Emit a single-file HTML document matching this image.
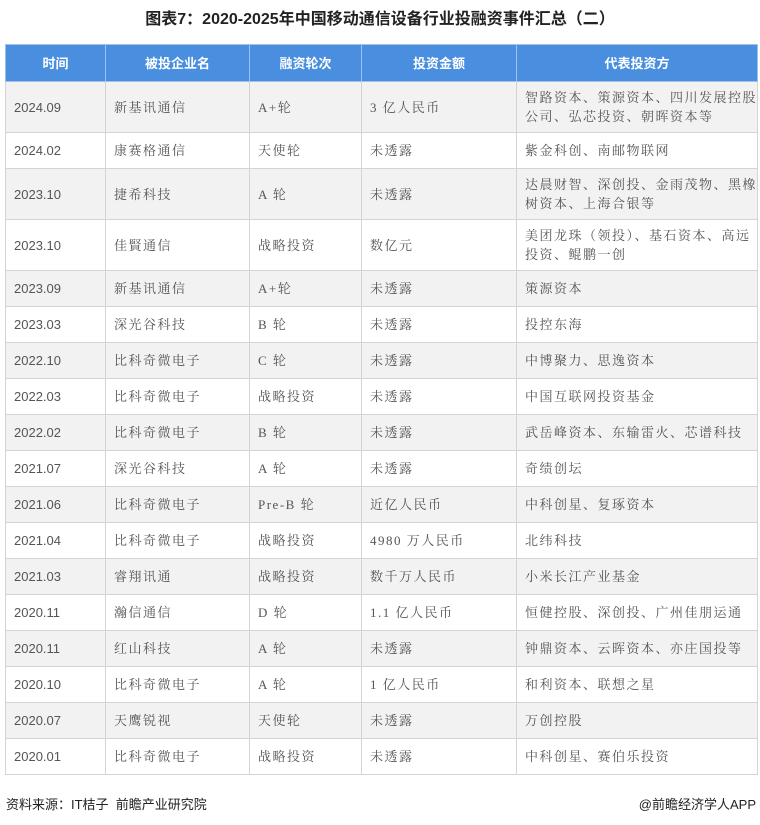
<!DOCTYPE html>
<html><head><meta charset="utf-8"><style>
body{margin:0;width:760px;height:825px;background:#fff;position:relative;font-family:"Liberation Sans","Noto Sans CJK SC",sans-serif;overflow:hidden}
.t{position:absolute;top:8px;left:0;width:760px;text-align:center;font-weight:bold;font-size:16px;color:#222;line-height:24px}
table{position:absolute;left:5px;top:44px;width:752px;border-collapse:collapse;table-layout:fixed}
td,th{border:1px solid #d4d4d4;padding:0 0 0 8px;font-size:13px;color:#555;line-height:19px;vertical-align:middle;font-family:"Liberation Serif","Noto Serif CJK SC",serif;letter-spacing:1.5px}
th{background:#4a8fdf;color:#fff;text-align:center;padding:0;font-family:"Liberation Sans","Noto Sans CJK SC",sans-serif;font-weight:bold;height:36px;border-color:#9fc1ec;letter-spacing:0}
tr:nth-child(even) td{background:#f2f2f2}
td{height:35px}
td.d{font-family:"Liberation Sans",sans-serif;letter-spacing:0}
tr.h2 td{height:50px}
.f{position:absolute;top:794px;left:6px;font-size:13px;color:#222}
.g{position:absolute;top:794px;right:4px;font-size:13px;color:#222}
</style></head><body>
<div class="t">图表7：2020-2025年中国移动通信设备行业投融资事件汇总（二）</div>
<table>
<colgroup><col style="width:100px"><col style="width:144px"><col style="width:112px"><col style="width:155px"><col style="width:241px"></colgroup>
<tr><th>时间</th><th>被投企业名</th><th>融资轮次</th><th>投资金额</th><th>代表投资方</th></tr>
<tr class="h2"><td class="d">2024.09</td><td>新基讯通信</td><td>A+轮</td><td>3 亿人民币</td><td>智路资本、策源资本、四川发展控股公司、弘芯投资、朝晖资本等</td></tr>
<tr><td class="d">2024.02</td><td>康赛格通信</td><td>天使轮</td><td>未透露</td><td>紫金科创、南邮物联网</td></tr>
<tr class="h2"><td class="d">2023.10</td><td>捷希科技</td><td>A 轮</td><td>未透露</td><td>达晨财智、深创投、金雨茂物、黑橡树资本、上海合银等</td></tr>
<tr class="h2"><td class="d">2023.10</td><td>佳賢通信</td><td>战略投资</td><td>数亿元</td><td>美团龙珠（领投）、基石资本、高远投资、鲲鹏一创</td></tr>
<tr><td class="d">2023.09</td><td>新基讯通信</td><td>A+轮</td><td>未透露</td><td>策源资本</td></tr>
<tr><td class="d">2023.03</td><td>深光谷科技</td><td>B 轮</td><td>未透露</td><td>投控东海</td></tr>
<tr><td class="d">2022.10</td><td>比科奇微电子</td><td>C 轮</td><td>未透露</td><td>中博聚力、思逸资本</td></tr>
<tr><td class="d">2022.03</td><td>比科奇微电子</td><td>战略投资</td><td>未透露</td><td>中国互联网投资基金</td></tr>
<tr><td class="d">2022.02</td><td>比科奇微电子</td><td>B 轮</td><td>未透露</td><td>武岳峰资本、东输雷火、芯谱科技</td></tr>
<tr><td class="d">2021.07</td><td>深光谷科技</td><td>A 轮</td><td>未透露</td><td>奇绩创坛</td></tr>
<tr><td class="d">2021.06</td><td>比科奇微电子</td><td>Pre-B 轮</td><td>近亿人民币</td><td>中科创星、复琢资本</td></tr>
<tr><td class="d">2021.04</td><td>比科奇微电子</td><td>战略投资</td><td>4980 万人民币</td><td>北纬科技</td></tr>
<tr><td class="d">2021.03</td><td>睿翔讯通</td><td>战略投资</td><td>数千万人民币</td><td>小米长江产业基金</td></tr>
<tr><td class="d">2020.11</td><td>瀚信通信</td><td>D 轮</td><td>1.1 亿人民币</td><td>恒健控股、深创投、广州佳朋运通</td></tr>
<tr><td class="d">2020.11</td><td>红山科技</td><td>A 轮</td><td>未透露</td><td>钟鼎资本、云晖资本、亦庄国投等</td></tr>
<tr><td class="d">2020.10</td><td>比科奇微电子</td><td>A 轮</td><td>1 亿人民币</td><td>和利资本、联想之星</td></tr>
<tr><td class="d">2020.07</td><td>天鹰锐视</td><td>天使轮</td><td>未透露</td><td>万创控股</td></tr>
<tr><td class="d">2020.01</td><td>比科奇微电子</td><td>战略投资</td><td>未透露</td><td>中科创星、赛伯乐投资</td></tr>
</table>
<div class="f">资料来源：IT桔子 &nbsp;前瞻产业研究院</div>
<div class="g">@前瞻经济学人APP</div>
</body></html>
